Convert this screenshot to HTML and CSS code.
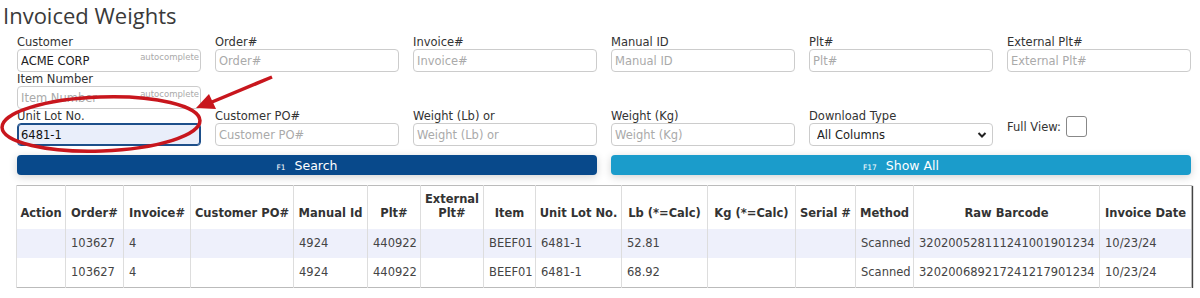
FILE: index.html
```html
<!DOCTYPE html>
<html>

<head>
    <title>Invoiced Weights</title>
    <link rel="stylesheet" href="styles.css">
</head>

<body>
    <h2 class="page-title">Invoiced Weights</h2>

    <!-- Filter form -->
    <form class="filters">
        <div class="field">
            <label for="customer">Customer</label>
            <div class="auto-wrap">
                <input type="text" id="customer" value="ACME CORP">
                <span class="auto-hint">autocomplete</span>
            </div>
            <label for="item">Item Number</label>
            <div class="auto-wrap">
                <input type="text" id="item" placeholder="Item Number">
                <span class="auto-hint">autocomplete</span>
            </div>
        </div>
        <div class="field">
            <label for="order">Order#</label>
            <input type="text" id="order" placeholder="Order#">
        </div>
        <div class="field">
            <label for="invoice">Invoice#</label>
            <input type="text" id="invoice" placeholder="Invoice#">
        </div>
        <div class="field">
            <label for="manual">Manual ID</label>
            <input type="text" id="manual" placeholder="Manual ID">
        </div>
        <div class="field">
            <label for="plt">Plt#</label>
            <input type="text" id="plt" placeholder="Plt#">
        </div>
        <div class="field">
            <label for="extplt">External Plt#</label>
            <input type="text" id="extplt" placeholder="External Plt#">
        </div>

        <div class="field">
            <label for="lot">Unit Lot No.</label>
            <input type="text" id="lot" class="focused" value="6481-1">
        </div>
        <div class="field">
            <label for="po">Customer PO#</label>
            <input type="text" id="po" placeholder="Customer PO#">
        </div>
        <div class="field">
            <label for="lb">Weight (Lb) or</label>
            <input type="text" id="lb" placeholder="Weight (Lb) or">
        </div>
        <div class="field">
            <label for="kg">Weight (Kg)</label>
            <input type="text" id="kg" placeholder="Weight (Kg)">
        </div>
        <div class="field">
            <label for="download">Download Type</label>
            <div class="select-wrap">
                <select id="download">
                    <option>All Columns</option>
                </select>
                <svg class="chevron" width="10" height="8" viewBox="0 0 10 8">
                    <path d="M1.5 2 L5 5.5 L8.5 2" fill="none" stroke="#222" stroke-width="2"/>
                </svg>
            </div>
        </div>
        <div class="field full-view">
            <span>Full View:</span>
            <span class="check-box"></span>
        </div>
    </form>

    <!-- Buttons -->
    <div class="actions">
        <button class="btn btn-search"><small>F1</small> Search</button>
        <button class="btn btn-all"><small>F17</small> Show All</button>
    </div>

    <!-- Results -->
    <table class="results">
        <colgroup>
            <col class="w-action"><col class="w-order"><col class="w-invoice"><col class="w-po">
            <col class="w-manual"><col class="w-plt"><col class="w-extplt"><col class="w-item">
            <col class="w-lot"><col class="w-lb"><col class="w-kg"><col class="w-serial">
            <col class="w-method"><col class="w-barcode"><col class="w-date">
        </colgroup>
        <thead>
            <tr>
                <th>Action</th>
                <th>Order#</th>
                <th>Invoice#</th>
                <th>Customer PO#</th>
                <th>Manual Id</th>
                <th>Plt#</th>
                <th>External<br>Plt#</th>
                <th>Item</th>
                <th>Unit Lot No.</th>
                <th>Lb (*=Calc)</th>
                <th>Kg (*=Calc)</th>
                <th>Serial #</th>
                <th>Method</th>
                <th>Raw Barcode</th>
                <th>Invoice Date</th>
            </tr>
        </thead>
        <tbody>
            <tr class="odd">
                <td></td><td>103627</td><td>4</td><td></td><td>4924</td><td>440922</td><td></td>
                <td>BEEF01</td><td>6481-1</td><td>52.81</td><td></td><td></td><td>Scanned</td>
                <td>320200528111241001901234</td><td>10/23/24</td>
            </tr>
            <tr>
                <td></td><td>103627</td><td>4</td><td></td><td>4924</td><td>440922</td><td></td>
                <td>BEEF01</td><td>6481-1</td><td>68.92</td><td></td><td></td><td>Scanned</td>
                <td>320200689217241217901234</td><td>10/23/24</td>
            </tr>
        </tbody>
    </table>

    <!-- Red annotation drawn over the page -->
    <svg class="annotation" width="300" height="160" viewBox="0 0 300 160">
        <ellipse cx="101" cy="124" rx="99" ry="27" transform="rotate(-2 101 124)"
            fill="none" stroke="#c8161d" stroke-width="3.5"/>
        <line x1="272" y1="77" x2="212" y2="102" stroke="#c8161d" stroke-width="3.5"/>
        <polygon points="196,108 209,94 216,109" fill="#c8161d"/>
    </svg>
</body>

</html>
```

FILE: styles.css
```css
body {
    font-family: "DejaVu Sans", Verdana, sans-serif;
    font-size: 11.5px;
    color: #333;
    background-color: #fff;
    margin: 0;
    padding: 0;
    position: relative;
}

.page-title {
    font-family: "Open Sans", sans-serif;
    font-weight: normal;
    font-size: 22px;
    line-height: 30px;
    color: #3a3a3a;
    margin: 0;
    padding: 0 0 0 3px;
    height: 35px;
}

.filters {
    display: grid;
    grid-template-columns: repeat(6, 184px);
    column-gap: 14px;
    margin: 0 0 0 17px;
    width: 1174px;
}

.field label {
    display: block;
    line-height: 14px;
    color: #333;
}

.field input,
.field select {
    display: block;
    box-sizing: border-box;
    width: 184px;
    height: 23px;
    margin: 0;
    padding: 0 3px;
    border: 1px solid #ccc;
    border-radius: 4px;
    font-family: "DejaVu Sans", Verdana, sans-serif;
    font-size: 11.5px;
    color: #222;
    background-color: #fff;
    outline: none;
}

.field input::placeholder {
    color: #aaa;
}

.field input.focused {
    border: 1px solid #1d4f8a;
    box-shadow: inset 0 0 0 1px #1d4f8a;
    background-color: #e9eefa;
    color: #111;
}

.auto-wrap {
    position: relative;
}

.auto-hint {
    position: absolute;
    right: 2px;
    top: 3px;
    font-size: 8.5px;
    color: #aaa;
}

.select-wrap {
    position: relative;
}

.field select {
    appearance: none;
    padding-left: 7px;
}

.chevron {
    position: absolute;
    right: 6px;
    top: 8px;
}

.full-view {
    display: flex;
    align-items: center;
    padding-top: 5px;
    height: 25px;
}

.check-box {
    display: inline-block;
    width: 19px;
    height: 19px;
    margin-left: 5px;
    border: 1px solid #888;
    border-radius: 3px;
}

.actions {
    display: grid;
    grid-template-columns: 580px 580px;
    column-gap: 14px;
    margin: 9px 0 0 17px;
}

.btn {
    height: 20px;
    border: none;
    border-radius: 4px;
    color: #fff;
    font-family: "DejaVu Sans", Verdana, sans-serif;
    font-size: 12.5px;
    padding: 0;
    box-shadow: 0 2px 8px rgba(0, 0, 0, 0.18);
}

.btn small {
    font-size: 7.5px;
    margin-right: 5px;
}

.btn-search {
    background-color: #08498b;
}

.btn-all {
    background-color: #1b9ccb;
}

.results {
    margin: 10px 0 0 16px;
    width: 1175px;
    table-layout: fixed;
    border-collapse: collapse;
    border: 1px solid #bbb;
    box-shadow: 1px 1px 1px #444;
}

.w-action { width: 49px; }
.w-order { width: 58px; }
.w-invoice { width: 67px; }
.w-po { width: 103px; }
.w-manual { width: 74px; }
.w-plt { width: 53px; }
.w-extplt { width: 63px; }
.w-item { width: 52px; }
.w-lot { width: 86px; }
.w-lb { width: 86px; }
.w-kg { width: 88px; }
.w-serial { width: 60px; }
.w-method { width: 58px; }
.w-barcode { width: 186px; }
.w-date { width: 92px; }

.results th {
    height: 43px;
    box-sizing: border-box;
    padding: 0 3px 9px;
    vertical-align: bottom;
    text-align: center;
    font-weight: bold;
    color: #333;
    line-height: 14px;
    border-left: 1px solid #ddd;
    white-space: nowrap;
}

.results td {
    height: 29px;
    padding: 0 5px;
    color: #444;
    border-left: 1px solid #ddd;
    white-space: nowrap;
    overflow: hidden;
}

.results tr.odd td {
    background-color: #eef0fb;
}

.annotation {
    position: absolute;
    left: 0;
    top: 0;
}
```
